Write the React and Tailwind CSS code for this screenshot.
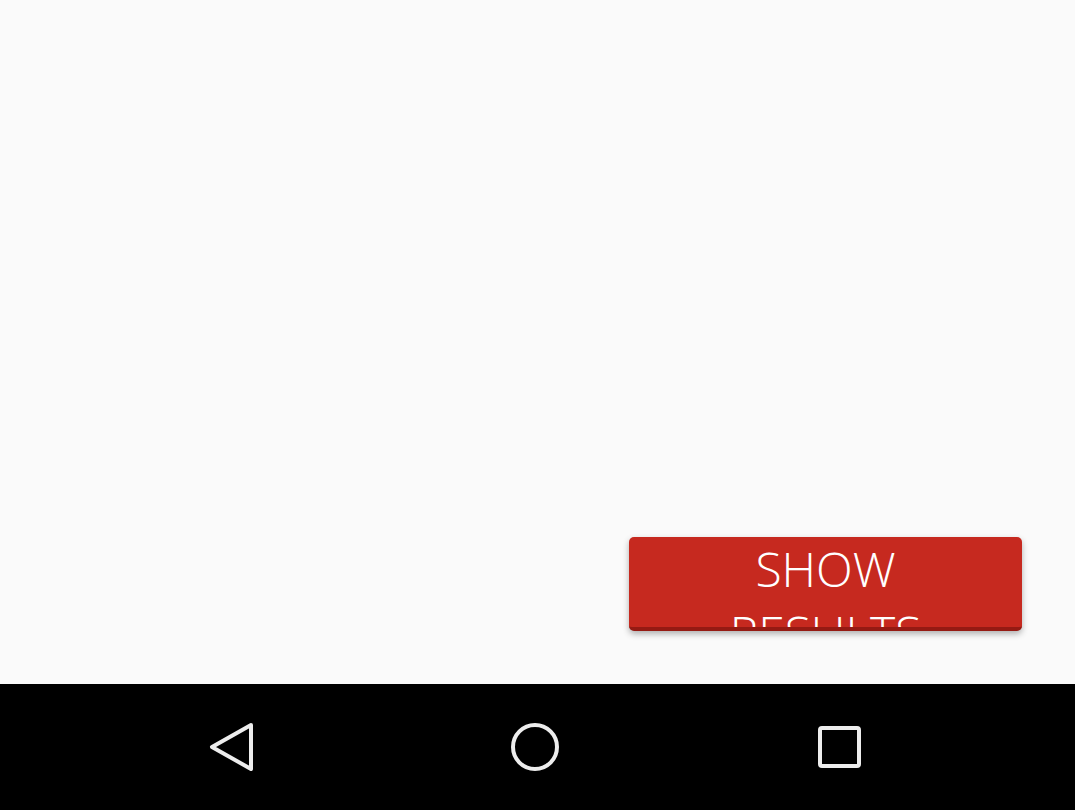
export default function App() {
  return (
    <div className="flex h-[810px] w-full flex-col bg-[#fafafa]" style={{ fontFamily: '"Open Sans", sans-serif' }}>
      {/* Content area */}
      <div className="flex flex-1 flex-col items-end justify-end pb-[53px] pr-[53px]">
        <div
          role="button"
          className="h-[94px] w-[393px] overflow-hidden rounded-[5px] border-b-4 border-[#951a13] bg-[#c6291f] px-[60px] text-center text-[48px] font-light uppercase leading-[64px] text-white shadow-[0_3px_6px_rgba(0,0,0,0.3)]"
        >
          Show Results
        </div>
      </div>

      {/* Navigation bar */}
      <div className="flex h-[126px] items-center justify-center gap-[256px] bg-black pr-[5px]">
        <svg width="48" height="48" viewBox="0 0 48 48" fill="none" stroke="#ededed" strokeWidth="4" strokeLinejoin="round">
          <path d="M44 2 L5 24 L44 46 Z" />
        </svg>
        <svg width="48" height="48" viewBox="0 0 48 48" fill="none" stroke="#ededed" strokeWidth="4">
          <circle cx="24" cy="24" r="22" />
        </svg>
        <svg width="48" height="48" viewBox="0 0 48 48" fill="none" stroke="#ededed" strokeWidth="4">
          <rect x="5" y="5" width="39" height="38" rx="2" />
        </svg>
      </div>
    </div>
  );
}
